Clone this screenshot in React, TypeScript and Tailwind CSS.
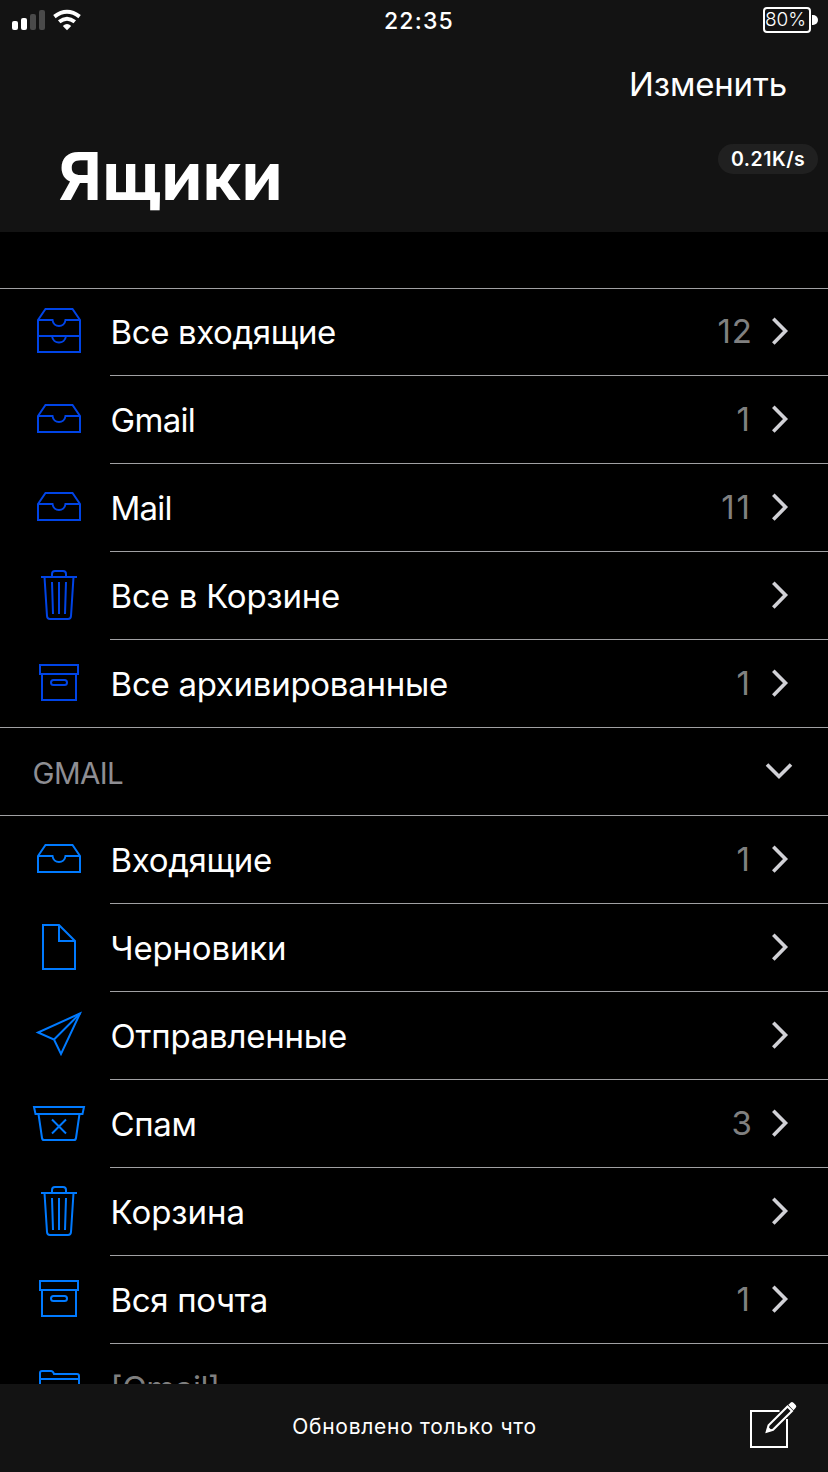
type IconName = 'inboxAll' | 'inbox' | 'trash' | 'archive' | 'doc' | 'plane' | 'spam' | 'folder';

type Mailbox = {
  icon: IconName;
  label: string;
  tracking: string;
  count?: string;
  muted?: boolean;
};

const ICONS: Record<IconName, string[]> = {
  inboxAll: [
    'M38 64V32L45.500 21H72.500L80 32V64Z',
    'M38 32H52.500C53 36 56 38 59 38S65 36 65.500 32H80',
    'M38 48H80M52 48C52.500 52.500 56 54.500 59 54.500S65.500 52.500 66 48',
  ],
  inbox: ['M38 56V40L45.500 29H72.500L80 40V56Z', 'M38 40H52.500C53 44 56 46 59 46S65 44 65.500 40H80'],
  trash: [
    'M41 25H77',
    'M52 25V22Q52 19 55 19H63Q66 19 66 22V25',
    'M44.500 25L47 64Q47.200 67 50 67H68Q70.800 67 71 64L73.500 25',
    'M52 30L53 62M59 30V62M66 30L65 62',
  ],
  archive: ['M40 25H78V34H40Z', 'M42 34V60H76V34', 'M53.500 40H64.500A2.500 2.500 0 0 1 64.500 45H53.500A2.500 2.500 0 0 1 53.500 40Z'],
  doc: ['M43 21H59L75 37V65H43Z', 'M59 21V37H75'],
  plane: ['M80 21.500L38 40.500L54 47.500L61 62Z', 'M54 47.500L80 21.500'],
  spam: [
    'M34 27H84L82.500 34H35.500Z',
    'M38.500 34L42 58Q42.300 60 44 60H74Q75.700 60 76 58L79.500 34',
    'M52 39.500L66 53.500M66 39.500L52 53.500',
  ],
  folder: ['M40 60V29Q40 27 42 27H51Q53 27 54 30H77Q79 30 79 32V60Z', 'M40 35H79'],
};

const ALL_BOXES: Mailbox[] = [
  { icon: 'inboxAll', label: 'Все входящие', tracking: 'tracking-[-0.4px]', count: '12' },
  { icon: 'inbox', label: 'Gmail', tracking: 'tracking-[-0.7px]', count: '1' },
  { icon: 'inbox', label: 'Mail', tracking: 'tracking-[-0.8px]', count: '11' },
  { icon: 'trash', label: 'Все в Корзине', tracking: 'tracking-[-0.22px]' },
  { icon: 'archive', label: 'Все архивированные', tracking: 'tracking-[-0.28px]', count: '1' },
];

const GMAIL_BOXES: Mailbox[] = [
  { icon: 'inbox', label: 'Входящие', tracking: 'tracking-[-0.35px]', count: '1' },
  { icon: 'doc', label: 'Черновики', tracking: 'tracking-[-0.2px]' },
  { icon: 'plane', label: 'Отправленные', tracking: 'tracking-[-0.22px]' },
  { icon: 'spam', label: 'Спам', tracking: 'tracking-[-0.4px]', count: '3' },
  { icon: 'trash', label: 'Корзина', tracking: 'tracking-[-0.05px]' },
  { icon: 'archive', label: 'Вся почта', tracking: 'tracking-[-0.35px]', count: '1' },
  { icon: 'folder', label: '[Gmail]', tracking: 'tracking-[-0.45px]', muted: true },
];

const COUNT_STYLES: Record<string, string> = {
  '1': 'mr-px',
  '3': '-mr-px',
  '11': '-mr-px tracking-[2px]',
  '12': '-mr-[2px] tracking-[1px]',
};

function Chevron() {
  return (
    <svg viewBox="751 0 77 87" className="h-[87px] w-[77px] shrink-0" fill="none" stroke="#d1d1d6" strokeWidth="3.6">
      <path d="M773.300 30.700L785.500 43.100L773.300 55.500" />
    </svg>
  );
}

function Row({ box, last }: { box: Mailbox; last?: boolean }) {
  return (
    <li className={`flex h-[88px] shrink-0 items-start ${last ? 'border-b border-[#a0a0a3]' : ''}`}>
      <svg viewBox="0 0 110 87" className="h-[87px] w-[110px] shrink-0" fill="none" strokeWidth="2" stroke="currentColor">
        {ICONS[box.icon].map((d) => (
          <path key={d} d={d} />
        ))}
      </svg>
      <div className={`flex h-[88px] flex-1 items-start pl-[0.6px] text-[33px] ${last ? '' : 'border-b border-[#a0a0a3]'}`}>
        <span className={`leading-[88px] whitespace-nowrap ${box.tracking} ${box.muted ? 'text-[#7f7f7f]' : 'text-white'}`}>{box.label}</span>
        {box.count && <span className={`ml-auto leading-[86px] text-[#808080] ${COUNT_STYLES[box.count]}`}>{box.count}</span>}
        {!box.muted && (
          <div className={box.count ? '' : 'ml-auto'}>
            <Chevron />
          </div>
        )}
      </div>
    </li>
  );
}

function StatusBar() {
  return (
    <div className="flex h-10 items-center">
      <svg viewBox="0 0 384 40" className="h-10 w-96 shrink-0" fill="#fff">
        <rect x="12" y="21" width="6" height="9" rx="2" />
        <rect x="21" y="18" width="6" height="12" rx="2" />
        <rect x="30" y="14" width="6" height="16" rx="2" fill="#4a4a4a" />
        <rect x="39" y="10" width="6" height="20" rx="2" fill="#4a4a4a" />
        <path d="M54.400 16.600Q67 6.800 79.600 16.600M59.200 21.800Q67 15.600 74.800 21.800" fill="none" stroke="#fff" strokeWidth="3.900" />
        <path d="M62.800 26Q67 22.200 71.200 26L67 30.200Z" />
      </svg>
      <span className="pt-[2px] text-[23px] leading-[40px] font-medium tracking-[1.2px]">22:35</span>
      <div className="mr-[10px] ml-auto flex items-center gap-px">
        <div className="h-[26px] w-12 rounded-[4px] border-2 border-white text-[19px] leading-[22px] font-light">80%</div>
        <div className="h-[10px] w-[6px] rounded-r-full bg-white" />
      </div>
    </div>
  );
}

export default function App() {
  return (
    <div className="flex h-[1472px] w-[828px] flex-col overflow-hidden bg-black font-['Inter','Noto_Sans',sans-serif] text-white">
      <header className="h-[232px] shrink-0 bg-[#131313]">
        <StatusBar />
        <nav className="flex h-[88px] justify-end pr-[41px]">
          <button className="text-[33px] leading-[88px] tracking-[-0.15px]">Изменить</button>
        </nav>
        <div className="flex items-start justify-between pr-[10px] pl-[58.5px]">
          <h1 className="text-[66px] leading-[96px] font-bold tracking-[0.35px]">Ящики</h1>
          <div className="mt-4 h-[30px] w-[100px] rounded-full bg-[#202020] pl-[13px] text-[19.5px] leading-[30px] font-semibold tracking-[0.5px] whitespace-nowrap">
            0.21K/s
          </div>
        </div>
      </header>

      <main className="flex flex-1 flex-col overflow-hidden pt-14">
        <div className="-mb-px h-px shrink-0 bg-[#a0a0a3]" />
        <ul className="text-[#0044e6]">
          {ALL_BOXES.map((b, i) => (
            <Row key={b.label} box={b} last={i === ALL_BOXES.length - 1} />
          ))}
        </ul>
        <div className="flex h-[88px] shrink-0 items-start justify-between border-b border-[#a0a0a3] pl-[32.6px]">
          <h2 className="text-[29.5px] leading-[90px] tracking-[-0.65px] text-[#8e8e93]">GMAIL</h2>
          <svg viewBox="751 0 77 87" className="h-[87px] w-[77px]" fill="none" stroke="#d1d1d6" strokeWidth="3.6">
            <path d="M767 36.500L779 48.500L791 36.500" />
          </svg>
        </div>
        <ul className="text-[#007aff]">
          {GMAIL_BOXES.map((b) => (
            <Row key={b.label} box={b} />
          ))}
        </ul>
      </main>

      <footer className="grid h-[88px] shrink-0 grid-cols-[1fr_auto_1fr] bg-[#131313]">
        <span />
        <p className="pl-px text-[21px] leading-[86px] tracking-[0.72px]">Обновлено только что</p>
        <svg viewBox="740 0 88 88" className="h-[88px] w-[88px] justify-self-end" fill="none" stroke="#fff" strokeWidth="2">
          <path d="M779.500 27H751V63H787V35" />
          <path d="M766.800 47.600L768.600 41.300L787.500 22.400L792 26.900L773 45.800Z" strokeWidth="2.100" />
          <path d="M766 48.500L768 42.500L772 46.500Z" fill="#fff" stroke="none" />
          <path d="M789.600 20.900L791.400 19.300Q792 18.800 792.800 19.500L795 21.700Q795.700 22.500 795 23.200L793.500 24.800Z" fill="#fff" strokeWidth="1.900" />
        </svg>
      </footer>
    </div>
  );
}
